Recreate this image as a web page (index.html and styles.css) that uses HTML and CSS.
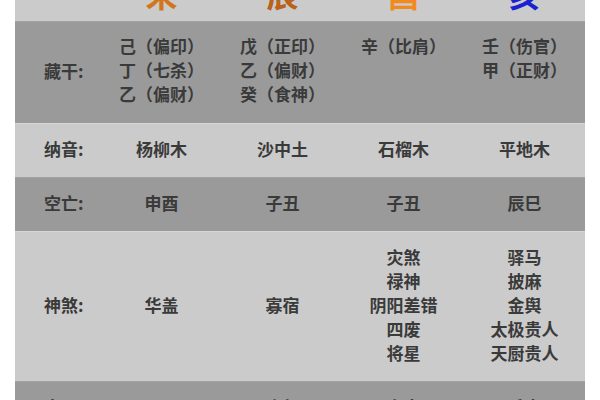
FILE: index.html
```html
<!DOCTYPE html>
<html lang="zh">
<head>
<meta charset="utf-8">
<link rel="stylesheet" href="styles.css">
</head>
<body>
<div class="table">
  <div class="row top">
    <div class="label"></div>
    <div class="big c-wei">未</div>
    <div class="big c-chen">辰</div>
    <div class="big c-you">酉</div>
    <div class="big c-hai">亥</div>
  </div>
  <div class="row dark hidden-row">
    <div class="label">藏干:</div>
    <div class="cell"><div>己（偏印）</div><div>丁（七杀）</div><div>乙（偏财）</div></div>
    <div class="cell"><div>戊（正印）</div><div>乙（偏财）</div><div>癸（食神）</div></div>
    <div class="cell"><div>辛（比肩）</div></div>
    <div class="cell"><div>壬（伤官）</div><div>甲（正财）</div></div>
  </div>
  <div class="row light short">
    <div class="label">纳音:</div>
    <div class="cell">杨柳木</div>
    <div class="cell">沙中土</div>
    <div class="cell">石榴木</div>
    <div class="cell">平地木</div>
  </div>
  <div class="row dark short">
    <div class="label">空亡:</div>
    <div class="cell">申酉</div>
    <div class="cell">子丑</div>
    <div class="cell">子丑</div>
    <div class="cell">辰巳</div>
  </div>
  <div class="row light shensha">
    <div class="label">神煞:</div>
    <div class="cell">华盖</div>
    <div class="cell">寡宿</div>
    <div class="cell"><div>灾煞</div><div>禄神</div><div>阴阳差错</div><div>四废</div><div>将星</div></div>
    <div class="cell"><div>驿马</div><div>披麻</div><div>金舆</div><div>太极贵人</div><div>天厨贵人</div></div>
  </div>
  <div class="row dark bottom">
    <div class="label">大运:</div>
    <div class="cell">己巳</div>
    <div class="cell">庚午</div>
    <div class="cell">辛未</div>
    <div class="cell">壬申</div>
  </div>
</div>
</body>
</html>
```
FILE: styles.css
```css
html, body {
  margin: 0;
  padding: 0;
  background: #ffffff;
  overflow: hidden;
}
body {
  font-family: "Noto Sans CJK SC", "Noto Sans", sans-serif;
  font-size: 17px;
  line-height: 24px;
  color: #3a3a3a;
  font-weight: 700;
}
.table {
  width: 570px;
  margin: -42px 15px 0;
}
.row {
  display: grid;
  grid-template-columns: 86px repeat(4, 121px);
  align-items: center;
}
.light {
  background: #cbcbcb;
  border-top: 1px solid #d6d6d6;
}
.dark {
  background: #9a9a9a;
  border-top: 1px solid #a2a2a2;
}
.label {
  padding-left: 29px;
}
.cell {
  text-align: center;
}
.short .label, .short .cell, .shensha .label, .shensha .cell, .hidden-row .label {
  padding-bottom: 4px;
}
.top {
  height: 63px;
  background: #cbcbcb;
  align-items: end;
}
.big {
  text-align: center;
  font-size: 32px;
  line-height: 32px;
  font-weight: 700;
  margin-bottom: 12px;
}
.c-wei { color: #d2761a; }
.c-chen { color: #b8621a; }
.c-you { color: #f28a1e; }
.c-hai { color: #1a22d0; }
.hidden-row {
  height: 101px;
}
.hidden-row .cell {
  align-self: start;
  padding-top: 12px;
}
.short {
  height: 53px;
}
.shensha {
  height: 149px;
}
.bottom {
  height: 60px;
  align-items: start;
}
.bottom .label, .bottom .cell {
  padding-top: 13px;
}
```
